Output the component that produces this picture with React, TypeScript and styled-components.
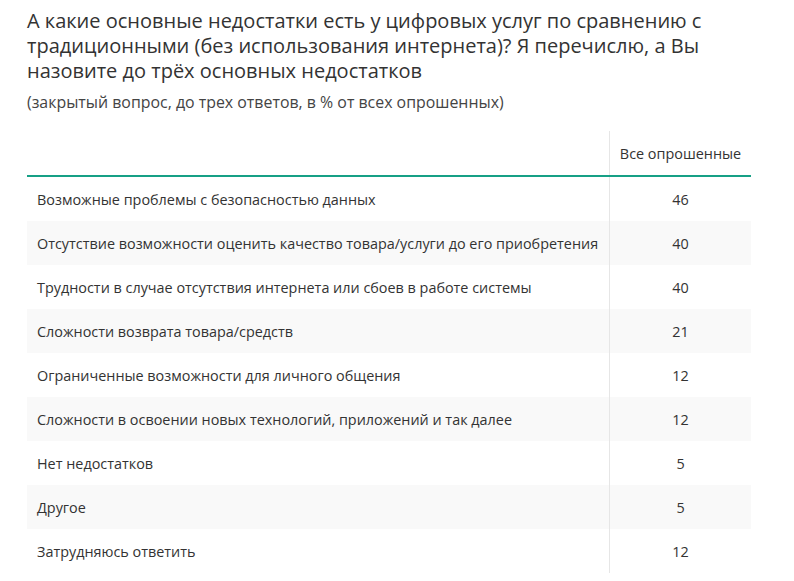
import React from "react";
import styled, {createGlobalStyle} from "styled-components";

const GlobalStyle = createGlobalStyle`
  html, body {
    margin: 0;
    padding: 0;
    background: #fff;
  }
  body {
    font-family: "Open Sans", "Noto Sans", sans-serif;
    color: #333;
  }
`;

const Page = styled.div`
  padding: 8px 27px 0 27px;
  width: 740px;
`;

const Title = styled.h2`
  margin: 0;
  font-size: 20px;
  line-height: 25px;
  font-weight: 400;
  color: #333;
`;

const Note = styled.p`
  margin: 9px 0 0;
  font-size: 15.9px;
  line-height: 21px;
  color: #444;
`;

const Table = styled.table`
  margin-top: 18px;
  width: 724px;
  border-collapse: collapse;
  font-size: 14.4px;
  color: #333;
`;

const HeadCell = styled.th`
  height: 44px;
  padding: 0;
  font-weight: 400;
  text-align: center;
  border-bottom: 2px solid #17a086;
  &:first-child {
    width: 582px;
    border-right: 1px solid #e6e6e6;
  }
`;

const Row = styled.tr<{ $striped: boolean }>`
  background: ${p => (p.$striped ? "#f9f9f9" : "#fff")};
`;

const Label = styled.td`
  height: 44px;
  padding: 0 0 0 10px;
  border-right: 1px solid #e6e6e6;
`;

const Value = styled.td`
  height: 44px;
  padding: 0;
  text-align: center;
`;

const rows: [string, number][] = [
    ["Возможные проблемы с безопасностью данных", 46],
    ["Отсутствие возможности оценить качество товара/услуги до его приобретения", 40],
    ["Трудности в случае отсутствия интернета или сбоев в работе системы", 40],
    ["Сложности возврата товара/средств", 21],
    ["Ограниченные возможности для личного общения", 12],
    ["Сложности в освоении новых технологий, приложений и так далее", 12],
    ["Нет недостатков", 5],
    ["Другое", 5],
    ["Затрудняюсь ответить", 12],
];

function App() {
    return (
        <Page>
            <GlobalStyle />
            <Title>
                А какие основные недостатки есть у цифровых услуг по сравнению с традиционными (без
                использования интернета)? Я перечислю, а Вы назовите до трёх основных недостатков
            </Title>
            <Note>(закрытый вопрос, до трех ответов, в % от всех опрошенных)</Note>
            <Table>
                <thead>
                <tr>
                    <HeadCell></HeadCell>
                    <HeadCell>Все опрошенные</HeadCell>
                </tr>
                </thead>
                <tbody>
                {rows.map(([label, value], i) =>
                    <Row key={label} $striped={i % 2 === 1}>
                        <Label>{label}</Label>
                        <Value>{value}</Value>
                    </Row>)}
                </tbody>
            </Table>
        </Page>
    );
}

export default App;
